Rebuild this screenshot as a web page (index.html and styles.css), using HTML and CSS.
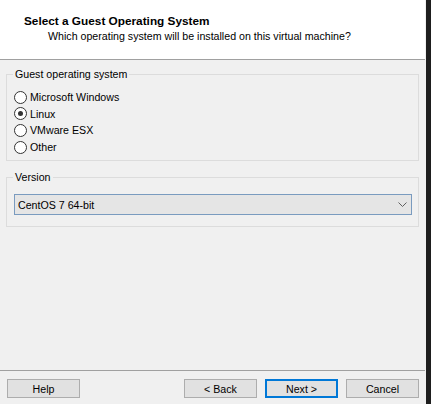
FILE: index.html
```html
<!DOCTYPE html>
<html>
<head>
<meta charset="utf-8">
<link rel="stylesheet" href="styles.css">
</head>
<body>
<div class="window">
  <div class="dialog">
    <div class="header">
      <div class="title">Select a Guest Operating System</div>
      <div class="subtitle">Which operating system will be installed on this virtual machine?</div>
    </div>
    <div class="content">
      <fieldset class="group group-os">
        <legend>Guest operating system</legend>
        <div class="radios">
          <label class="radio-row"><span class="radio"></span><span>Microsoft Windows</span></label>
          <label class="radio-row"><span class="radio checked"></span><span>Linux</span></label>
          <label class="radio-row"><span class="radio"></span><span>VMware ESX</span></label>
          <label class="radio-row"><span class="radio"></span><span>Other</span></label>
        </div>
      </fieldset>
      <fieldset class="group group-version">
        <legend>Version</legend>
        <div class="combo">
          <span class="combo-text">CentOS 7 64-bit</span>
          <svg class="chevron" width="9" height="5" viewBox="0 0 9 5"><path d="M0.5 0.5 L4.5 4.5 L8.5 0.5" fill="none" stroke="#606060" stroke-width="1"/></svg>
        </div>
      </fieldset>
    </div>
    <div class="footer">
      <button class="btn">Help</button>
      <div class="nav">
        <button class="btn">&lt; Back</button>
        <button class="btn default">Next &gt;</button>
        <button class="btn">Cancel</button>
      </div>
    </div>
  </div>
  <div class="edge"></div>
</div>
</body>
</html>
```

FILE: styles.css
```css
html, body {
  margin: 0;
  padding: 0;
}
body {
  font-family: "Liberation Sans", Arial, sans-serif;
  font-size: 10.65px;
  color: #000;
  background: #f0f0f0;
}
.window {
  display: flex;
  width: 431px;
  height: 404px;
}
.dialog {
  width: 426px;
  display: flex;
  flex-direction: column;
  background: #f0f0f0;
}
.edge {
  width: 5px;
  background: #1e1e1e;
}
.header {
  box-sizing: border-box;
  background: #fff;
  border-bottom: 1px solid #a0a0a0;
  margin-right: 1px;
  padding: 14px 0 0 24px;
  height: 60px;
}
.title {
  font-weight: bold;
  font-size: 11.8px;
  line-height: 15px;
}
.subtitle {
  line-height: 15px;
  padding-left: 24px;
}
.content {
  padding: 0 7px 0 6px;
}
.group {
  margin: 0;
  padding: 0;
  border: 1px solid #dcdcdc;
  min-width: 0;
}
.group legend {
  margin-left: 6px;
  padding: 0 2px;
  line-height: 15px;
}
.group-os {
  margin-top: 7px;
}
.radios {
  display: flex;
  flex-direction: column;
  padding: 7px 0 5px 7px;
}
.radio-row {
  display: flex;
  align-items: center;
  gap: 3px;
  height: 16.6px;
}
.radio {
  width: 11px;
  height: 11px;
  border: 1px solid #333;
  border-radius: 50%;
  background: #fff;
  display: flex;
  align-items: center;
  justify-content: center;
  flex: none;
}
.radio.checked::after {
  content: "";
  width: 5px;
  height: 5px;
  border-radius: 50%;
  background: #333;
}
.group-version {
  margin-top: 9px;
}
.combo {
  margin: 9px 6px 11px 7px;
  height: 21px;
  box-sizing: border-box;
  border: 1px solid #7a9bbf;
  background: #e5e5e5;
  display: flex;
  align-items: center;
  justify-content: space-between;
  padding: 0 4px 0 3px;
}
.chevron {
  display: block;
}
.footer {
  margin-top: auto;
  border-top: 1px solid #a0a0a0;
  margin-right: 1px;
  padding: 8px 6px 6px 7px;
  display: flex;
  justify-content: space-between;
}
.nav {
  display: flex;
  gap: 8px;
}
.btn {
  width: 73px;
  height: 19px;
  box-sizing: border-box;
  background: #e1e1e1;
  border: 1px solid #adadad;
  font-family: "Liberation Sans", Arial, sans-serif;
  font-size: 10.65px;
  color: #000;
  padding: 0;
  margin: 0;
  border-radius: 0;
}
.btn.default {
  border: 2px solid #0078d7;
}
```
